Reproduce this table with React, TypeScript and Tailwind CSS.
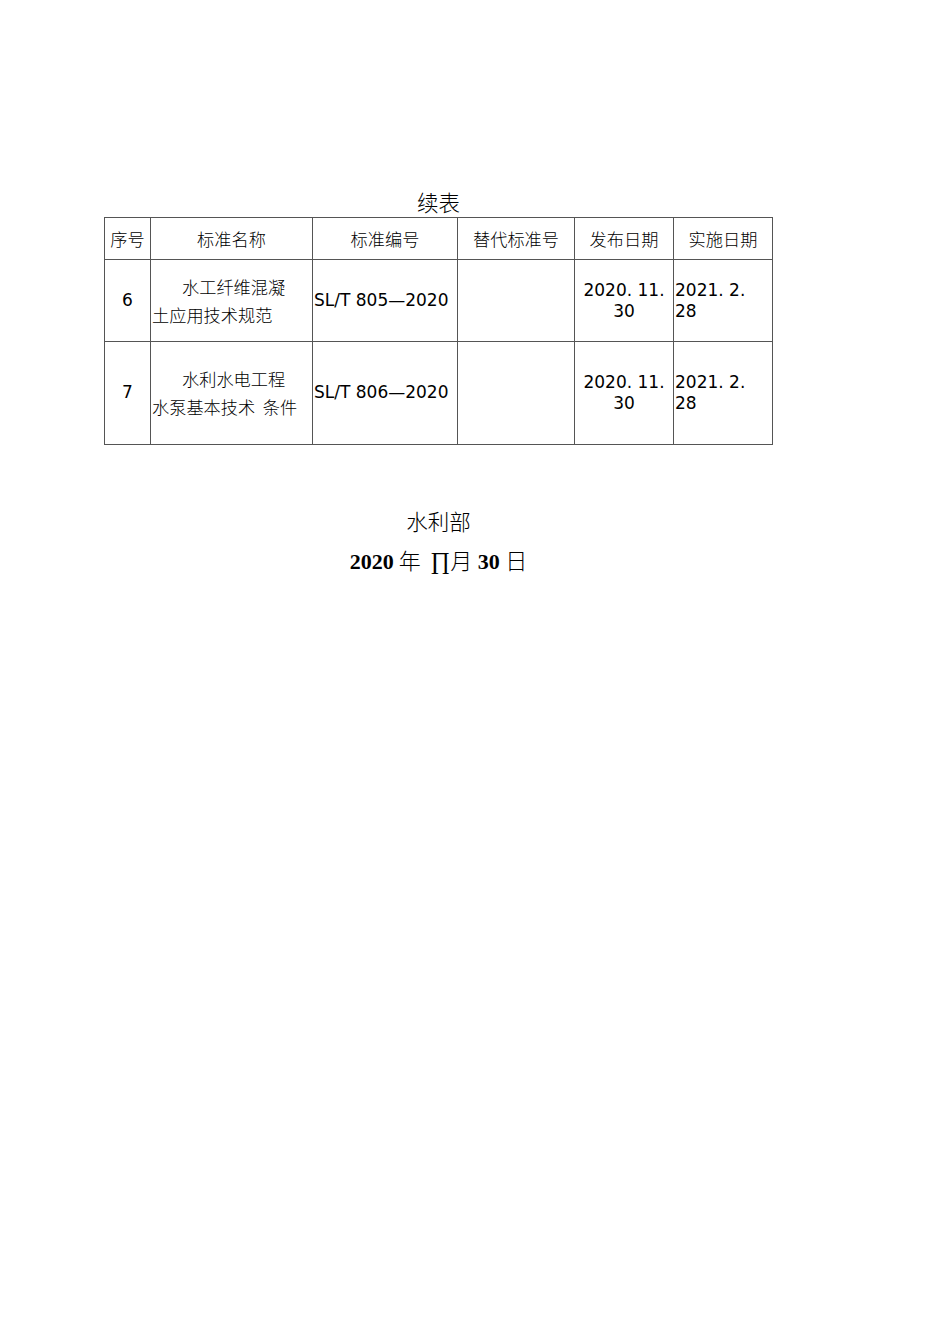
import React from "react";

const cjk = { fontFamily: '"Noto Sans CJK SC", sans-serif' };
const latin = { fontFamily: '"DejaVu Sans", "Noto Sans CJK SC", sans-serif' };
const serif = { fontFamily: '"Liberation Serif", "Noto Sans CJK SC", serif' };

export default function App() {
  const cell = "border border-[#555] p-0 align-middle";
  return (
    <div className="w-[950px] h-[1344px] bg-white text-black">
      <div className="pt-[188px] ml-[104px] w-[669px]">
        <div className="text-center text-[21.5px] leading-[28px] font-light" style={cjk}>续表</div>
        <table className="mt-[1px] border-collapse table-fixed w-[669px]">
          <colgroup>
            <col className="w-[46px]" />
            <col className="w-[162px]" />
            <col className="w-[145px]" />
            <col className="w-[117px]" />
            <col className="w-[99px]" />
            <col className="w-[99px]" />
          </colgroup>
          <thead>
            <tr className="h-[42px] text-[17.2px] font-light" style={cjk}>
              <th className={cell + " font-light text-center"}>序号</th>
              <th className={cell + " font-light text-center"}>标准名称</th>
              <th className={cell + " font-light text-center"}>标准编号</th>
              <th className={cell + " font-light text-center"}>替代标准号</th>
              <th className={cell + " font-light text-center"}>发布日期</th>
              <th className={cell + " font-light text-center"}>实施日期</th>
            </tr>
          </thead>
          <tbody>
            {[
              { n: "6", a: "水工纤维混凝", b: "土应用技术规范", code: "SL/T 805—2020", h: "h-[82px]" },
              { n: "7", a: "水利水电工程", b: "水泵基本技术  条件", code: "SL/T 806—2020", h: "h-[103px]" },
            ].map((r) => (
              <tr key={r.n} className={r.h}>
                <td className={cell + " text-center text-[17px]"} style={latin}>{r.n}</td>
                <td className={cell + " text-[17.2px] leading-[28px] font-light pl-[1px]"} style={cjk}>
                  <div className="pl-[30px]">{r.a}</div>
                  <div className="whitespace-pre">{r.b}</div>
                </td>
                <td className={cell + " text-[17px] pl-[1px] whitespace-nowrap"} style={latin}>{r.code}</td>
                <td className={cell}></td>
                <td className={cell + " text-center text-[17px] leading-[21px]"} style={latin}>
                  <div>2020. 11.</div>
                  <div>30</div>
                </td>
                <td className={cell + " text-left text-[17px] leading-[21px] pl-[1px]"} style={latin}>
                  <div>2021. 2.</div>
                  <div>28</div>
                </td>
              </tr>
            ))}
          </tbody>
        </table>
        <div className="mt-[62px] text-center text-[21.5px] leading-[28px] font-light" style={cjk}>水利部</div>
        <div className="mt-[10px] text-center text-[22px] leading-[28px] whitespace-pre" style={serif}>
          <b>2020</b>
          <span className="font-light" style={cjk}> 年  </span>
          <span className="text-[24px]" style={serif}>∏</span>
          <span style={cjk} className="font-light">月</span>
          <b> 30 </b>
          <span className="font-light" style={cjk}>日</span>
        </div>
      </div>
    </div>
  );
}
